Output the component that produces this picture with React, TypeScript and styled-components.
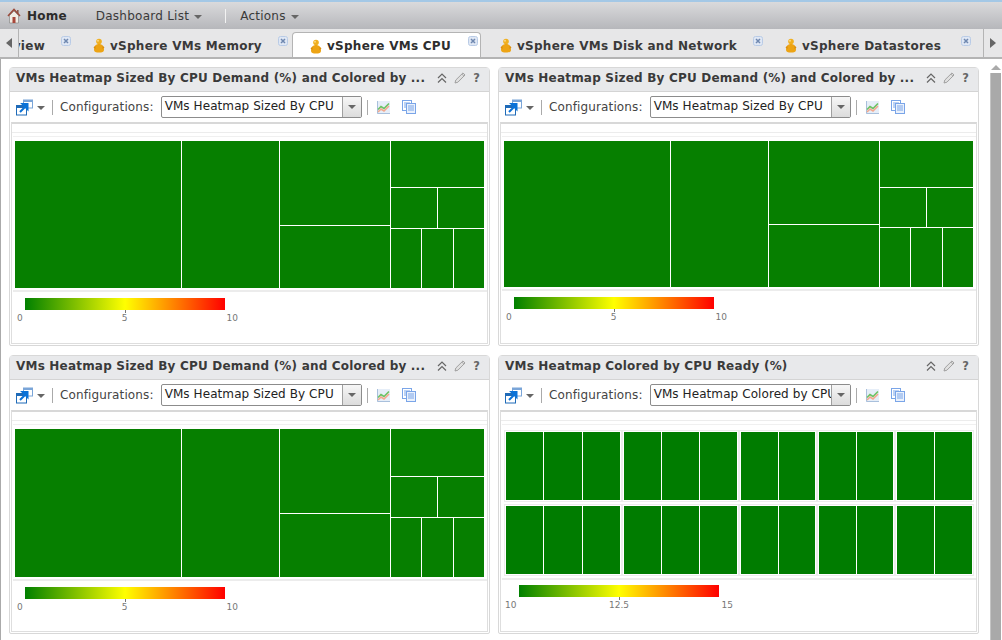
import React from "react";
import styled, { createGlobalStyle } from "styled-components";

const Global = createGlobalStyle`
  html, body { margin: 0; padding: 0; background: #fff; }
  body { font-family: "DejaVu Sans", sans-serif; color: #333; overflow: hidden; }
`;

const Page = styled.div`
  width: 1002px;
  height: 640px;
  display: flex;
  flex-direction: column;
  overflow: hidden;
`;
const TopBar = styled.header`
  height: 27px;
  flex: none;
  border-top: 2px solid #a4c8e6;
  background: linear-gradient(#dadadc, #b6b7bb);
  display: flex;
  align-items: center;
  padding-left: 7px;
  font-size: 12px;
  color: #3a3a3a;
`;
const HomeLabel = styled.span`
  font-weight: 700;
  font-size: 12px;
  letter-spacing: 0.2px;
  margin-left: 6px;
  margin-right: 29px;
  color: #2c2c2c;
`;
const MenuLabel = styled.span`
  letter-spacing: 0.25px;
`;
const Caret = styled.span`
  display: inline-block;
  width: 0;
  height: 0;
  margin-left: 5px;
  margin-top: 2px;
  border-left: 4px solid transparent;
  border-right: 4px solid transparent;
  border-top: 4px solid #666;
`;
const ToolCaret = styled(Caret)`
  margin-left: 4px;
`;
const SelectCaret = styled(Caret)`
  margin: 0;
`;
const MenuSep = styled.span`
  width: 1px;
  height: 14px;
  background: #f2f2f2;
  margin: 0 14px 0 23px;
`;
const TabBar = styled.nav`
  height: 28px;
  flex: none;
  background: #e7e7e8;
  border-bottom: 2px solid #b4b4b4;
  display: flex;
  box-sizing: content-box;
`;
const ScrollButton = styled.div<{ $right?: boolean }>`
  flex: none;
  width: 18px;
  display: flex;
  align-items: center;
  justify-content: center;
  ${(p) => (p.$right ? "border-left" : "border-right")}: 1px solid #b4b4b4;
`;
const Arrow = styled.span<{ $right?: boolean }>`
  width: 0;
  height: 0;
  border-top: 5px solid transparent;
  border-bottom: 5px solid transparent;
  ${(p) => (p.$right ? "border-left" : "border-right")}: 6px solid #666;
`;
const TabViewport = styled.div`
  flex: 1;
  min-width: 0;
  overflow: hidden;
  display: flex;
  align-items: flex-end;
`;
const Tab = styled.div<{ $active?: boolean; $width: number }>`
  flex: none;
  box-sizing: border-box;
  width: ${(p) => p.$width}px;
  height: ${(p) => (p.$active ? 27 : 28)}px;
  margin-left: 1px;
  margin-bottom: ${(p) => (p.$active ? -2 : 0)}px;
  padding: ${(p) => (p.$active ? "0 0 0 17px" : "5px 0 0 18px")};
  display: flex;
  align-items: center;
  position: relative;
  font-weight: 700;
  font-size: 12px;
  color: #3a3a3a;
  ${(p) =>
    p.$active
      ? `background:#fff;border:1px solid #b4b4b4;border-bottom:none;border-radius:4px 4px 0 0;color:#2e2e2e;`
      : ""}
`;
const ScrolledTab = styled(Tab)`
  margin-left: 0;
  padding: 5px 29px 0 0;
  justify-content: flex-end;
`;
const TabText = styled.span`
  flex: none;
  margin-left: 5px;
  white-space: nowrap;
  letter-spacing: 0.27px;
`;
const TabClose = styled.span<{ $active?: boolean }>`
  position: absolute;
  right: ${(p) => (p.$active ? 2 : 3)}px;
  top: ${(p) => (p.$active ? 3 : 7)}px;
  width: 10px;
  height: 10px;
  display: flex;
`;
const Body = styled.div`
  flex: 1;
  min-height: 0;
  display: flex;
  border-left: 1px solid #aaa;
`;
const Content = styled.main`
  flex: 1;
  min-width: 0;
  padding: 8px 0 0 8px;
`;
const Grid = styled.div`
  display: grid;
  grid-template-columns: 481px 481px;
  grid-auto-rows: 279px;
  column-gap: 8px;
  row-gap: 9px;
`;
const ScrollBar = styled.aside`
  flex: none;
  width: 13px;
  margin-left: 6px;
  display: flex;
  flex-direction: column;
  align-items: center;
  padding-top: 6px;
  box-sizing: border-box;
`;
const ScrollUp = styled.span`
  width: 0;
  height: 0;
  border-left: 5px solid transparent;
  border-right: 5px solid transparent;
  border-bottom: 5px solid #aaa;
  margin-bottom: 3px;
`;
const ScrollThumb = styled.div`
  width: 11px;
  margin-right: 1px;
  flex: 1;
  background: #a9a9a9;
  border-left: 1px solid #c4c4c4;
  box-sizing: border-box;
`;
const Panel = styled.section`
  box-sizing: border-box;
  border: 1px solid #d8d8d8;
  border-radius: 4px 4px 2px 2px;
  display: flex;
  flex-direction: column;
  min-width: 0;
`;
const TitleBar = styled.div`
  height: 24px;
  box-sizing: border-box;
  flex: none;
  background: #e8e9eb;
  border-bottom: 1px solid #d4d4d4;
  display: flex;
  align-items: center;
  padding: 0 9px 4px 6px;
  font-weight: 700;
  font-size: 12px;
  color: #3a3a3a;
`;
const Title = styled.span`
  flex: 1;
  white-space: nowrap;
  letter-spacing: 0.2px;
`;
const TitleActions = styled.div`
  display: flex;
  align-items: center;
  gap: 7px;
`;
const Help = styled.span`
  font-size: 11.5px;
  font-weight: 700;
  color: #666;
`;
const Toolbar = styled.div`
  height: 30px;
  flex: none;
  display: flex;
  align-items: center;
  padding-left: 6px;
  font-size: 12px;
  color: #444;
`;
const ConfigLabel = styled.span`
  letter-spacing: 0.13px;
`;
const ToolSep = styled.span<{ $mx: string }>`
  width: 1px;
  height: 15px;
  background: #aaa;
  margin: ${(p) => p.$mx};
`;
const ToolSpacer = styled.span`
  width: 12px;
  flex: none;
`;
const Select = styled.div`
  box-sizing: border-box;
  width: 201px;
  height: 22px;
  margin-left: 7px;
  border: 1px solid #8c8c8c;
  border-radius: 2px;
  display: flex;
  align-items: stretch;
  color: #222;
  background: #fff;
`;
const SelectText = styled.span`
  flex: 1;
  min-width: 0;
  overflow: hidden;
  white-space: nowrap;
  padding-left: 3px;
  line-height: 19px;
  letter-spacing: 0.08px;
`;
const SelectArrow = styled.span`
  flex: none;
  width: 18px;
  border-left: 1px solid #a0a0a0;
  background: linear-gradient(#f6f6f6, #dcdcdc);
  display: flex;
  align-items: center;
  justify-content: center;
`;
const Chart = styled.div`
  flex: 1;
  min-height: 0;
  margin: 0 1px 1px;
  border: 1px solid #dedede;
  border-top: 2px solid #d8d8d8;
  display: flex;
  flex-direction: column;
  box-sizing: border-box;
`;
const ChartHead = styled.div`
  height: 8px;
  flex: none;
  border-bottom: 1px solid #ececec;
`;
const Plot = styled.div`
  flex: none;
  border-bottom: 2px solid #ececec;
  border-top: 1px solid #f0f0f0;
  margin-top: 3px;
  padding: 4px 2px 2px 2px;
  margin-left: 1px;
`;
const Node = styled.div<{ $dir?: "row" | "column"; $size?: number }>`
  display: flex;
  flex-direction: ${(p) => p.$dir || "row"};
  gap: 1px;
  min-width: 0;
  min-height: 0;
  flex: ${(p) => (p.$size ? `0 0 ${p.$size}px` : "1 1 0")};
  background: #fff;
`;
const Leaf = styled.div<{ $size?: number }>`
  flex: ${(p) => (p.$size ? `0 0 ${p.$size}px` : "1 1 0")};
  min-width: 0;
  background: #067f00;
`;
const TreeRoot = styled(Node)<{ $h: number }>`
  flex: none;
  height: ${(p) => p.$h}px;
  width: 469px;
`;
const TileGrid = styled.div`
  display: flex;
  flex-direction: column;
  gap: 2px;
  padding-top: 1px;
`;
const TileRow = styled.div`
  display: flex;
`;
const TileGroup = styled.div<{ $w: number }>`
  box-sizing: border-box;
  flex: none;
  width: ${(p) => p.$w}px;
  height: 72px;
  padding: 1px;
  border: 1px solid #ececec;
  display: flex;
  gap: 1px;
`;
const Tile = styled.div`
  flex: 1 1 0;
  background: #007c00;
`;
const Legend = styled.div<{ $wide?: boolean }>`
  padding-top: ${(p) => (p.$wide ? 5 : 6)}px;
  margin-left: ${(p) => (p.$wide ? 5 : 0)}px;
`;
const LegendBar = styled.div`
  width: 200px;
  height: 12px;
  margin-left: 13px;
  background: linear-gradient(to right, #008000, #ffff00 50%, #ff0000);
  position: relative;
  &::after {
    content: "";
    position: absolute;
    left: 100px;
    top: 12px;
    width: 1px;
    height: 3px;
    background: #777;
  }
`;
const LegendLabels = styled.div<{ $wide?: boolean }>`
  width: ${(p) => (p.$wide ? 228 : 221)}px;
  margin-left: ${(p) => (p.$wide ? -1 : 5)}px;
  margin-top: 2px;
  display: flex;
  justify-content: space-between;
  font-size: 9px;
  line-height: 12px;
  color: #777;
`;

const HomeIcon = () => (
  <svg width="14" height="16" viewBox="0 0 14 16">
    <rect x="10" y="2" width="1.6" height="3.5" fill="#8a5a4a" />
    <path d="M2.500 7.500 7 3l4.500 4.500V15h-9z" fill="#f1ede4" stroke="#888" strokeWidth=".7" />
    <path d="M1 8 7 1.500 13 8" fill="none" stroke="#9a4a3a" strokeWidth="1.600" />
    <rect x="5.500" y="9" width="3" height="6" fill="#a8473a" />
  </svg>
);
const PersonIcon = () => (
  <svg width="12" height="15" viewBox="0 0 12 15" style={{ flex: "none" }}>
    <circle cx="6" cy="3.500" r="2.800" fill="#f0b020" />
    <path d="M1 12c0-4 2-6 5-6s5 2 5 6c0 2-2 2.500-5 2.500S1 14 1 12z" fill="#eda414" />
    <path d="M0.500 9.500 2.500 7.500 2.500 11zM11.500 9.500 9.500 7.500V11z" fill="#d98c10" />
    <circle cx="5" cy="2.800" r="1" fill="#fbd780" />
  </svg>
);
const CloseIcon = () => (
  <svg width="10" height="10" viewBox="0 0 10 10">
    <rect x=".5" y=".5" width="9" height="9" rx="2" fill="#dfe7f4" stroke="#b9cbe6" />
    <path d="M3 3l4 4M7 3 3 7" stroke="#6f88b0" strokeWidth="1.500" />
  </svg>
);
const LinkWindowIcon = () => (
  <svg width="17" height="17" viewBox="0 0 17 17" style={{ flex: "none" }}>
    <rect x="7.500" y="1" width="9" height="8" fill="#fff" stroke="#7aa5d8" />
    <rect x="7.500" y="1" width="9" height="2" fill="#7aa5d8" />
    <rect x=".5" y="6.500" width="10" height="9.500" fill="#fff" stroke="#1f6bb8" />
    <rect x=".5" y="6.500" width="10" height="2.500" fill="#1f6bb8" />
    <path d="M4 13 9.500 7.500M6.500 5h5v5z" stroke="#0a72d8" strokeWidth="2" fill="#0a72d8" />
  </svg>
);
const TrendIcon = () => (
  <svg width="13" height="13" viewBox="0 0 13 13" style={{ flex: "none" }}>
    <rect x="0" y="0" width="13" height="13" fill="#e6eef8" />
    <path d="M.5 0v12.500H13" fill="none" stroke="#a9c0dc" />
    <path d="M1 8.500l3-3 3 2 5-5" fill="none" stroke="#6cc264" strokeWidth="1.600" />
    <path d="M1 11l3-3 3 2 5-5" fill="none" stroke="#f2a88e" strokeWidth="1.600" />
  </svg>
);
const CopyIcon = () => (
  <svg width="14" height="14" viewBox="0 0 14 14" style={{ flex: "none" }}>
    <rect x=".5" y=".5" width="9" height="10" fill="#fff" stroke="#7aa5e8" />
    <rect x="4.500" y="3.500" width="9" height="10" fill="#eaf1fc" stroke="#7aa5e8" />
    <path d="M6 6h6M6 8h6M6 10h6M2 3h6M2 5h2M2 7h2" stroke="#7aa5e8" />
  </svg>
);
const ChevronsIcon = () => (
  <svg width="10" height="10" viewBox="0 0 10 10">
    <path d="M1 5l4-4 4 4M1 9.500l4-4 4 4" fill="none" stroke="#666" strokeWidth="1.200" />
  </svg>
);
const PencilIcon = () => (
  <svg width="12" height="12" viewBox="0 0 12 12">
    <path d="M1 11l.8-3L9 .9 11 3 3.900 10.200z" fill="#e0e0e0" stroke="#999" strokeWidth=".9" />
    <path d="M7.800 2l2.100 2.100" stroke="#999" strokeWidth=".8" />
  </svg>
);

type T = { s?: number; d?: "row" | "column"; c?: T[] };
const treeNode = (n: T, key: number): React.ReactNode =>
  n.c ? (
    <Node key={key} $dir={n.d} $size={n.s}>
      {n.c.map(treeNode)}
    </Node>
  ) : (
    <Leaf key={key} $size={n.s} />
  );

const tree = (a: number, b: number, c: number): T[] => [
  { s: 166 },
  { s: 97 },
  { s: 110, d: "column", c: [{ s: a }, {}] },
  {
    d: "column",
    c: [
      { s: b },
      { s: c, d: "row", c: [{}, {}] },
      { d: "row", c: [{ s: 30 }, { s: 31 }, {}] },
    ],
  },
];

const TreeMap = ({ h, nodes }: { h: number; nodes: T[] }) => (
  <TreeRoot $h={h}>{nodes.map(treeNode)}</TreeRoot>
);

const groups: [number, number][] = [
  [118, 3],
  [117, 3],
  [78, 2],
  [78, 2],
  [79, 2],
];
const Tiles = () => (
  <TileGrid>
    {[0, 1].map((r) => (
      <TileRow key={r}>
        {groups.map(([w, n], i) => (
          <TileGroup key={i} $w={w}>
            {Array.from({ length: n }, (_, j) => (
              <Tile key={j} />
            ))}
          </TileGroup>
        ))}
      </TileRow>
    ))}
  </TileGrid>
);

const PanelView = ({
  title,
  config,
  labels,
  wide,
  children,
}: {
  title: string;
  config: string;
  labels: string[];
  wide?: boolean;
  children: React.ReactNode;
}) => (
  <Panel>
    <TitleBar>
      <Title>{title}</Title>
      <TitleActions>
        <ChevronsIcon />
        <PencilIcon />
        <Help>?</Help>
      </TitleActions>
    </TitleBar>
    <Toolbar>
      <LinkWindowIcon />
      <ToolCaret />
      <ToolSep $mx="0 7px 0 7px" />
      <ConfigLabel>Configurations:</ConfigLabel>
      <Select>
        <SelectText>{config}</SelectText>
        <SelectArrow>
          <SelectCaret />
        </SelectArrow>
      </Select>
      <ToolSep $mx="0 9px 0 5px" />
      <TrendIcon />
      <ToolSpacer />
      <CopyIcon />
    </Toolbar>
    <Chart>
      <ChartHead />
      <Plot>{children}</Plot>
      <Legend $wide={wide}>
        <LegendBar />
        <LegendLabels $wide={wide}>
          {labels.map((l) => (
            <span key={l}>{l}</span>
          ))}
        </LegendLabels>
      </Legend>
    </Chart>
  </Panel>
);

const longTitle = "VMs Heatmap Sized By CPU Demand (%) and Colored by ...";
const sized = "VMs Heatmap Sized By CPU";

export default function App() {
  const tabs = [
    { label: "vSphere VMs Memory", w: 216 },
    { label: "vSphere VMs CPU", w: 189, active: true },
    { label: "vSphere VMs Disk and Network", w: 284 },
    { label: "vSphere Datastores", w: 207 },
  ];
  return (
    <Page>
      <Global />
      <TopBar>
        <HomeIcon />
        <HomeLabel>Home</HomeLabel>
        <MenuLabel>Dashboard List</MenuLabel>
        <Caret />
        <MenuSep />
        <MenuLabel>Actions</MenuLabel>
        <Caret />
      </TopBar>
      <TabBar>
        <ScrollButton>
          <Arrow />
        </ScrollButton>
        <TabViewport>
          <ScrolledTab $width={55}>
            <TabText>Overview</TabText>
            <TabClose>
              <CloseIcon />
            </TabClose>
          </ScrolledTab>
          {tabs.map((t) => (
            <Tab key={t.label} $width={t.w} $active={t.active}>
              <PersonIcon />
              <TabText>{t.label}</TabText>
              <TabClose $active={t.active}>
                <CloseIcon />
              </TabClose>
            </Tab>
          ))}
        </TabViewport>
        <ScrollButton $right>
          <Arrow $right />
        </ScrollButton>
      </TabBar>
      <Body>
        <Content>
          <Grid>
            <PanelView title={longTitle} config={sized} labels={["0", "5", "10"]}>
              <TreeMap h={147} nodes={tree(84, 46, 40)} />
            </PanelView>
            <PanelView title={longTitle} config={sized} labels={["0", "5", "10"]}>
              <TreeMap h={146} nodes={tree(83, 46, 39)} />
            </PanelView>
            <PanelView title={longTitle} config={sized} labels={["0", "5", "10"]}>
              <TreeMap h={148} nodes={tree(84, 47, 40)} />
            </PanelView>
            <PanelView
              title="VMs Heatmap Colored by CPU Ready (%)"
              config="VMs Heatmap Colored by CPU Ready"
              labels={["10", "12.5", "15"]}
              wide
            >
              <Tiles />
            </PanelView>
          </Grid>
        </Content>
        <ScrollBar>
          <ScrollUp />
          <ScrollThumb />
        </ScrollBar>
      </Body>
    </Page>
  );
}
